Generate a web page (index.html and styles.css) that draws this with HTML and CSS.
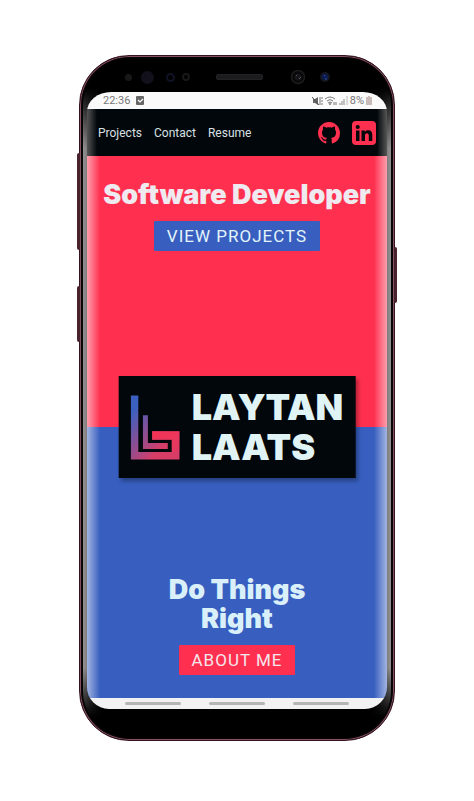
FILE: index.html
```html
<!DOCTYPE html>
<html lang="en">
<head>
<meta charset="utf-8">
<meta name="viewport" content="width=device-width, initial-scale=1">
<title>Laytan Laats</title>
<link rel="stylesheet" href="styles.css">
</head>
<body>
<div class="phone">
  <span class="key key-volume"></span>
  <span class="key key-assist"></span>
  <span class="key key-power"></span>
  <div class="sensors">
    <span class="dot"></span>
    <span class="iris"></span>
    <span class="ring"></span>
    <span class="ring ring-dim"></span>
    <span class="speaker"></span>
    <svg class="lens" viewBox="0 0 16 16"><circle cx="8" cy="8" r="6.5" fill="#080808" stroke="#1c1c1e" stroke-width="1.5"/><circle cx="8" cy="8" r="3.5" fill="#15151a"/><path d="M6 7l1-1M9 10l2-2" stroke="#55555c"/></svg>
    <svg class="camera" viewBox="0 0 12 12"><circle cx="6" cy="6" r="5" fill="#141720"/><circle cx="6" cy="6" r="3" fill="#0c1c52"/><path d="M5 5l1-1M6 8h2" stroke="#3452a4"/></svg>
  </div>
  <div class="screen">
    <div class="status">
      <span class="time">22:36</span>
      <svg class="check" viewBox="0 0 8 9"><rect width="8" height="9" rx="1" fill="#666"/><path d="M2 4l2 2 3-3" fill="none" stroke="#fff" stroke-width="1.2"/></svg>
      <span class="signals">
        <svg width="11" height="10" viewBox="0 0 11 10"><path d="M1 3h2l3-2v8L3 7H1z" fill="#666"/><path d="M0 1l7 8" stroke="#555"/><path d="M8 1v8M10 1v2M10 4v2M10 7v2" stroke="#777"/></svg>
        <svg width="12" height="10" viewBox="0 0 12 10"><path d="M0 3q5-4 10 0M2 5q3-3 6 0M3 7q2-2 4 0" fill="none" stroke="#777"/><circle cx="5" cy="8" r="1" fill="#777"/><path d="M9 6v3M11 6v3" stroke="#777"/></svg>
        <svg width="9" height="9" viewBox="0 0 9 9"><path d="M1 7v2M3 5v4M5 3v6" stroke="#888"/><path d="M8 0v9" stroke="#bbb"/></svg>
        <span>8%</span>
        <svg width="6" height="9" viewBox="0 0 6 9"><path d="M2 0h2v1h2v8H0V1h2z" fill="#c9bbb7"/></svg>
      </span>
    </div>
    <nav class="nav">
      <a href="#projects">Projects</a>
      <a href="#contact">Contact</a>
      <a href="#resume">Resume</a>
      <span class="social">
        <a href="#github" aria-label="GitHub"><svg width="22" height="22" viewBox="0 0 16 16"><path fill="#ff304f" d="M8 0C3.58 0 0 3.58 0 8c0 3.54 2.29 6.53 5.47 7.59.4.07.55-.17.55-.38 0-.19-.01-.82-.01-1.49-2.01.37-2.53-.49-2.69-.94-.09-.23-.48-.94-.82-1.13-.28-.15-.68-.52-.01-.53.63-.01 1.08.58 1.23.82.72 1.21 1.87.87 2.33.66.07-.52.28-.87.51-1.07-1.78-.2-3.64-.89-3.64-3.95 0-.87.31-1.59.82-2.15-.08-.2-.36-1.02.08-2.12 0 0 .67-.21 2.2.82.64-.18 1.32-.27 2-.27s1.36.09 2 .27c1.53-1.04 2.2-.82 2.2-.82.44 1.1.16 1.92.08 2.12.51.56.82 1.27.82 2.15 0 3.07-1.87 3.75-3.65 3.95.29.25.54.73.54 1.48 0 1.07-.01 1.93-.01 2.2 0 .21.15.46.55.38A8.01 8.01 0 0 0 16 8c0-4.42-3.58-8-8-8z"/></svg></a>
        <a href="#linkedin" aria-label="LinkedIn"><svg width="24" height="24" viewBox="0 0 24 24"><rect width="24" height="24" rx="4" fill="#ff304f"/><circle cx="5.7" cy="6" r="2.1" fill="#02070c"/><path fill="#02070c" d="M4 9.5h3.5V20H4zM9.5 9.5h3.3v1.4c.7-1.1 1.8-1.7 3.4-1.7 3 0 4.1 1.9 4.1 5V20h-3.5v-5.2c0-1.5-.4-2.6-1.8-2.6s-2 1.1-2 2.6V20H9.5z"/></svg></a>
      </span>
    </nav>
    <main class="home">
      <section class="half half-top">
        <h2>Software Developer</h2>
        <a class="button button-blue" href="#projects">VIEW PROJECTS</a>
      </section>
      <section class="half half-bottom">
        <h2>Do Things<br>Right</h2>
        <a class="button button-red" href="#about">ABOUT ME</a>
      </section>
      <div class="brand">
        <svg width="49" height="65" viewBox="58 90 148 194">
          <defs><linearGradient id="mark" gradientUnits="userSpaceOnUse" x1="70" y1="130" x2="175" y2="220"><stop offset="0" stop-color="#3b60c0"/><stop offset="1" stop-color="#d83d68"/></linearGradient>
          <linearGradient id="tip" gradientUnits="userSpaceOnUse" x1="123" y1="198" x2="206" y2="284"><stop offset="0" stop-color="#ff304f"/><stop offset="1" stop-color="#ff304f" stop-opacity="0"/></linearGradient></defs>
          <path fill="url(#mark)" d="M58 90H81V261H182V224H123V198H206V284H58zM95 150H110V234H170V252H95z"/>
          <path fill="url(#tip)" d="M123 198H206V261H182V224H123z"/>
        </svg>
        <h1>LAYTAN<br>LAATS</h1>
      </div>
    </main>
    <div class="gestures"><span></span><span></span><span></span></div>
  </div>
</div>
</body>
</html>
```
FILE: styles.css
```css
* {
  box-sizing: border-box;
}

body {
  display: flex;
  flex-direction: column;
  min-height: 100vh;
  margin: 0;
  padding: 55px 79px 60px;
  background: #fff;
  font-family: Roboto, "Liberation Sans", sans-serif;
}

h1,
h2 {
  margin: 0;
  font-family: Inter, "Liberation Sans", sans-serif;
  font-weight: 900;
}

a {
  color: inherit;
  text-decoration: none;
}

svg {
  display: block;
}

.phone {
  position: relative;
  display: flex;
  flex: 1;
  flex-direction: column;
  padding: 0 5px 31px;
  border: 1px solid #36141f;
  border-radius: 50px;
  background: linear-gradient(90deg, #000 1px, #929090 3px, #858384 6px, #000 22px, #000 calc(100% - 22px), #858384 calc(100% - 6px), #929090 calc(100% - 3px), #000 calc(100% - 1px));
  box-shadow: inset 0 0 0 1px #85505f, inset 0 0 0 3px #080507;
}

.phone::before {
  position: absolute;
  inset: 2px;
  border-radius: 48px;
  background: linear-gradient(#000 30px, transparent 90px, transparent calc(100% - 70px), #000 calc(100% - 20px));
  content: "";
}

.key {
  position: absolute;
  left: -3px;
  width: 3px;
  border-radius: 2px 0 0 2px;
  background: #48222d;
}

.key-volume {
  top: 97px;
  height: 97px;
}

.key-assist {
  top: 230px;
  height: 56px;
}

.key-power {
  top: 191px;
  right: -3px;
  left: auto;
  height: 56px;
  border-radius: 0 2px 2px 0;
}

.sensors {
  position: relative;
  display: flex;
  align-items: center;
  height: 36px;
  padding: 6px 58px 0 40px;
}

.dot {
  width: 7px;
  height: 7px;
  border-radius: 50%;
  background: #18181a;
}

.iris {
  width: 13px;
  height: 13px;
  margin-left: 9px;
  border-radius: 50%;
  background: #12111b;
}

.ring {
  width: 9px;
  height: 9px;
  margin-left: 12px;
  border: 2px solid #101226;
  border-radius: 50%;
}

.ring-dim {
  width: 8px;
  height: 8px;
  margin-left: 7px;
  border-color: #18181a;
}

.speaker {
  width: 47px;
  height: 6px;
  margin-left: 26px;
  border-radius: 2px;
  border: 1px solid #222224;
  background: #1c1c1e;
}

.lens {
  width: 16px;
  height: 16px;
  margin-left: auto;
}

.camera {
  width: 12px;
  height: 12px;
  margin-left: 13px;
}

.screen {
  position: relative;
  display: flex;
  flex: 1;
  flex-direction: column;
  margin: 0 2px;
  border-radius: 24px 24px 22px 22px / 20px 20px 22px 22px;
  overflow: hidden;
}

.screen::after {
  position: absolute;
  inset: 64px 0 11px;
  background: linear-gradient(90deg, #fff8 0, #fff5 5px, #fff0 13px, #fff0 calc(100% - 13px), #fff5 calc(100% - 5px), #fff8 100%);
  content: "";
  pointer-events: none;
}

.status {
  display: flex;
  align-items: center;
  height: 17px;
  padding: 0 15px 0 16px;
  background: #fafafa;
  color: #777;
  font-size: 11px;
}

.check {
  width: 8px;
  height: 9px;
  margin-left: 6px;
}

.signals {
  display: flex;
  align-items: center;
  gap: 2px;
  margin-left: auto;
}

.nav {
  display: flex;
  align-items: center;
  gap: 12px;
  height: 47px;
  padding: 0 11px;
  background: linear-gradient(90deg, #555 0, #02070c 10px, #02070c calc(100% - 10px), #555 100%);
  color: #d8e0e3;
  font-size: 12px;
}

.social {
  display: flex;
  align-items: center;
  gap: 12px;
  margin-left: auto;
}

.home {
  position: relative;
  display: grid;
  flex: 1;
  grid-template-rows: 1fr 1fr;
}

.half {
  display: flex;
  flex-direction: column;
  align-items: center;
  text-align: center;
}

.half h2 {
  font-size: 27px;
  line-height: 29px;
  white-space: nowrap;
}

.half-top {
  padding-top: 24px;
  background: #ff304f;
  color: #eeeaf0;
}

.half-bottom {
  justify-content: flex-end;
  padding-bottom: 23px;
  background: #385fbf;
  color: #d9f0fa;
}

.button {
  margin-top: 12px;
  padding: 0 13px;
  border-radius: 1px;
  font-size: 17px;
  line-height: 30px;
  letter-spacing: 1px;
}

.button-blue {
  background: #385fbf;
  color: #e3f4fa;
}

.button-red {
  background: #ff304f;
  color: #f3e6ed;
}

.brand {
  position: absolute;
  top: 50%;
  left: 50%;
  display: flex;
  align-items: center;
  gap: 12px;
  padding: 11px 12px;
  background: #02070c;
  box-shadow: 2px 3px 4px #0005;
  color: #e0f3f5;
  transform: translate(-50%, -50%);
}

.brand h1 {
  font-size: 36px;
  line-height: 40px;
}

.gestures {
  display: flex;
  align-items: center;
  justify-content: center;
  gap: 28px;
  height: 11px;
  background: #f2f2f2;
}

.gestures span {
  width: 56px;
  height: 3px;
  border-radius: 2px;
  background: #b5b5b5;
}
```
